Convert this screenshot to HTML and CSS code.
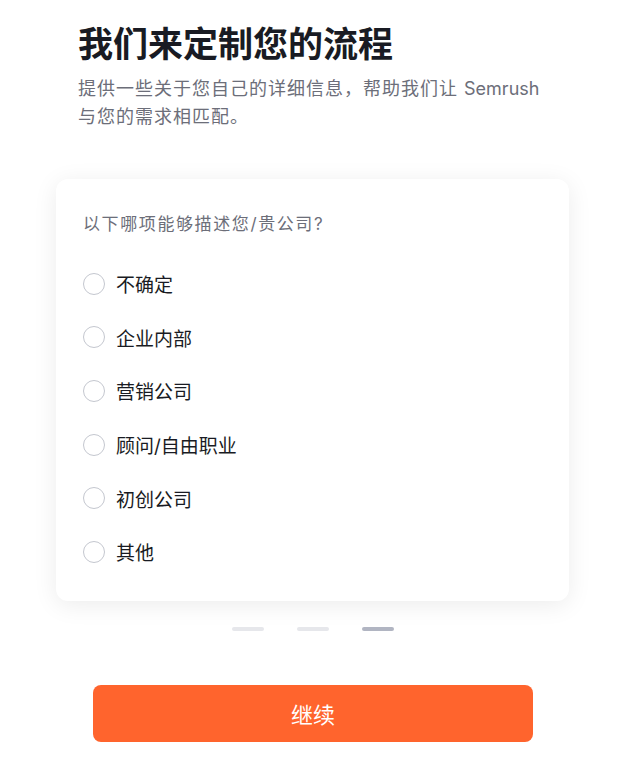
FILE: index.html
```html
<!DOCTYPE html>
<html lang="zh-CN">
<head>
    <meta charset="UTF-8">
    <title>定制流程</title>
    <link rel="stylesheet" href="styles.css">
</head>
<body>
<div class="page">
    <div class="head">
        <h1 class="title">我们来定制您的流程</h1>
        <p class="sub">提供一些关于您自己的详细信息，帮助我们让 <span class="latin">Semrush</span> 与您的需求相匹配。</p>
    </div>
    <div class="card">
        <p class="ask">以下哪项能够描述您/贵公司?</p>
        <ul class="opts">
            <li><span class="radio"></span>不确定</li>
            <li><span class="radio"></span>企业内部</li>
            <li><span class="radio"></span>营销公司</li>
            <li><span class="radio"></span>顾问/自由职业</li>
            <li><span class="radio"></span>初创公司</li>
            <li><span class="radio"></span>其他</li>
        </ul>
    </div>
    <div class="steps">
        <span></span>
        <span></span>
        <span class="now"></span>
    </div>
    <div class="btn-row">
        <button class="btn">继续</button>
    </div>
</div>
</body>
</html>
```

FILE: styles.css
```css
*{
    margin: 0;
    padding: 0;
    box-sizing: border-box;
}
body{
    background: #fff;
    font-family: Inter, "Noto Sans CJK SC", sans-serif;
    color: #191b23;
}
.page{
    width: 513px;
    margin-left: 56px;
    padding-top: 20px;
}
.head{
    padding: 0 22px;
}
.title{
    font-size: 35px;
    line-height: 48px;
    font-weight: 700;
    color: #191b23;
}
.sub{
    margin-top: 7px;
    font-size: 18px;
    line-height: 28px;
    letter-spacing: 1px;
    color: #6c6e79;
}
.sub .latin{
    letter-spacing: 0;
}
.card{
    margin-top: 48px;
    background: #fff;
    border-radius: 12px;
    box-shadow: 0 4px 24px rgba(0, 0, 0, 0.08);
    padding: 31px 27px 22px;
}
.ask{
    font-size: 17px;
    line-height: 28px;
    letter-spacing: 1.6px;
    color: #6c6e79;
}
ul{
    list-style: none;
}
.opts{
    margin-top: 19px;
}
.opts li{
    display: flex;
    align-items: center;
    height: 53.6px;
    font-size: 19px;
    color: #191b23;
}
.radio{
    width: 22px;
    height: 22px;
    border: 1px solid #c4c7cf;
    border-radius: 50%;
    margin-right: 11px;
}
.steps{
    display: flex;
    justify-content: center;
    gap: 33px;
    margin-top: 26px;
}
.steps span{
    width: 32px;
    height: 4px;
    border-radius: 2px;
    background: #e6e7eb;
}
.steps span.now{
    background: #b1b5c2;
}
.btn-row{
    padding: 54px 36px 0 37px;
}
.btn{
    display: block;
    width: 100%;
    height: 57px;
    border: 0;
    border-radius: 8px;
    background: #ff642d;
    color: #fff;
    font-family: Inter, "Noto Sans CJK SC", sans-serif;
    font-size: 22px;
}
```
